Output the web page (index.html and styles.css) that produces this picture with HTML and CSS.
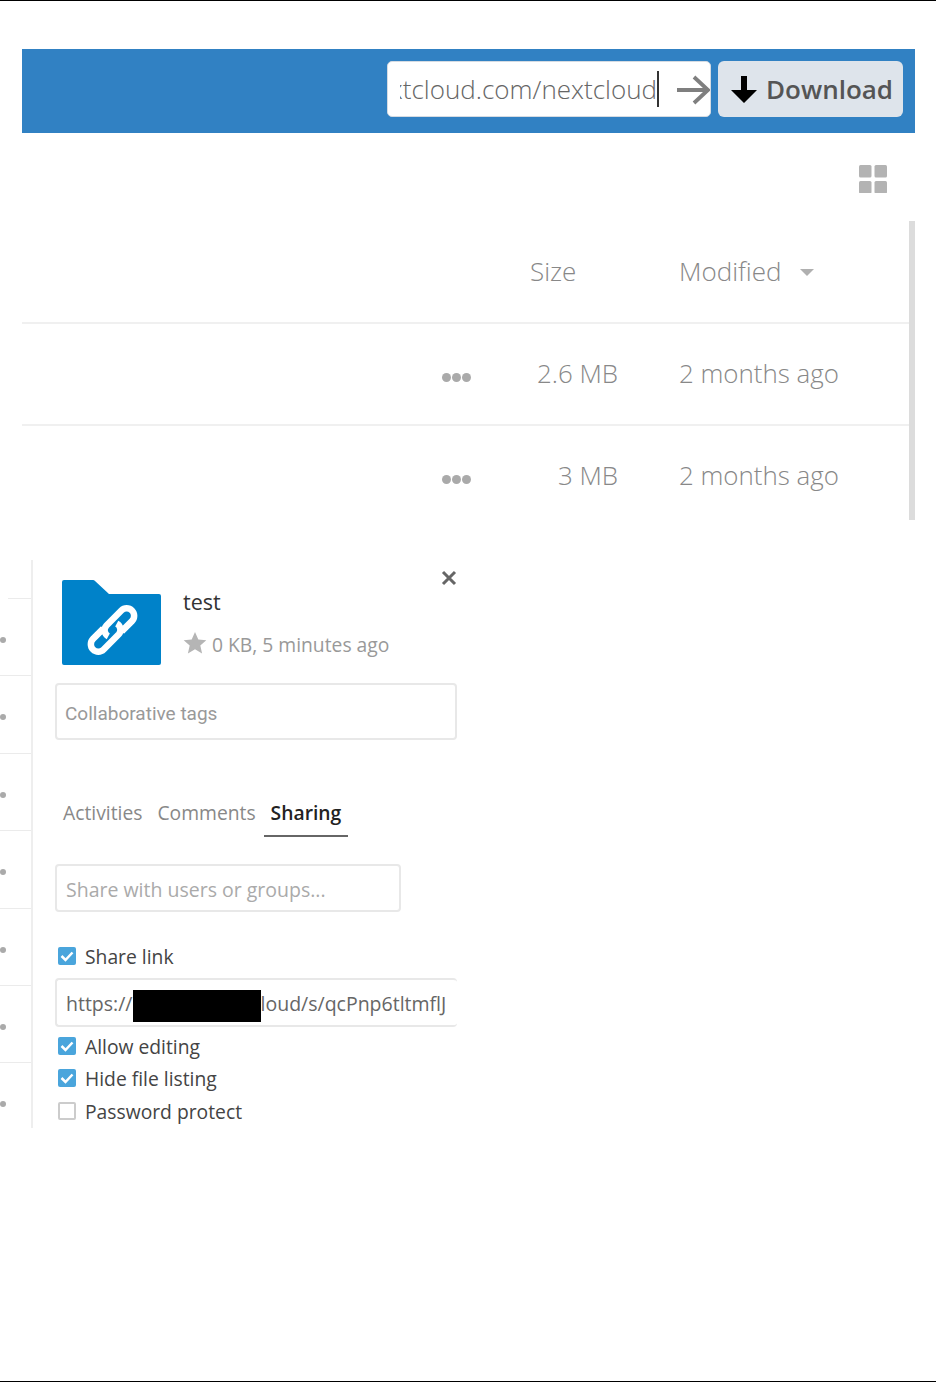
FILE: index.html
```html
<!DOCTYPE html>
<html lang="en">
<head>
<meta charset="utf-8">
<title>Nextcloud share</title>
<link rel="stylesheet" href="styles.css">
</head>
<body>
<div class="page">
  <section class="shot-top">
    <header class="bar">
      <div class="url">
        <span class="url-clip"><span class="url-text">nextcloud.com/nextcloud</span></span>
        <span class="caret"></span>
        <svg class="go" width="34" height="30" viewBox="0 0 34 30"><path d="M1 15H31M18 2l14 13-14 13" fill="none" stroke="#7f7f7f" stroke-width="3.800"/></svg>
      </div>
      <button class="dl">
        <svg width="28" height="28" viewBox="0 0 28 28"><path d="M11 1h6v14h10L14 28 1 15h10z" fill="#000"/></svg>
        <span>Download</span>
      </button>
    </header>
    <div class="view-row">
      <svg width="28" height="28" viewBox="0 0 28 28" fill="#b3b3b3"><rect width="12.500" height="12.500" rx="1.500"/><rect x="15.500" width="12.500" height="12.500" rx="1.500"/><rect y="16" width="12.500" height="12.500" rx="1.500"/><rect x="15.500" y="16" width="12.500" height="12.500" rx="1.500"/></svg>
    </div>
    <div class="table">
      <div class="row head"><span class="size">Size</span><span class="mod">Modified<i class="tri"></i></span></div>
      <div class="row"><span class="dots"><i></i><i></i><i></i></span><span class="size r">2.6 MB</span><span class="mod">2 months ago</span></div>
      <div class="row last"><span class="dots"><i></i><i></i><i></i></span><span class="size r">3 MB</span><span class="mod">2 months ago</span></div>
    </div>
  </section>

  <section class="shot-bottom">
    <div class="rail">
      <div class="rail-row"><i></i></div><div class="rail-row"><i></i></div><div class="rail-row"><i></i></div><div class="rail-row"><i></i></div><div class="rail-row"><i></i></div><div class="rail-row"><i></i></div><div class="rail-row"><i></i></div>
    </div>
    <div class="panel">
      <div class="info">
        <svg class="folder" width="100" height="85" viewBox="0 0 100 85">
          <path d="M2 0h29a3 3 0 0 1 2 1l14 13h50a2 2 0 0 1 2 2v67a2 2 0 0 1-2 2H2a2 2 0 0 1-2-2V2a2 2 0 0 1 2-2z" fill="#0082c9"/>
          <g fill="none" stroke="#fff" stroke-width="6.500" transform="translate(50.500 50) rotate(-45)">
            <path d="M5.500 7.500H20A7.500 7.500 0 0 0 20 -7.500H-1A7 7 0 0 0 -7.500 1.500"/>
            <path d="M-5.500 -7.500H-20A7.500 7.500 0 0 0 -20 7.500H1A7 7 0 0 0 7.500 -1.500"/>
          </g>
        </svg>
        <div class="meta">
          <div class="name">test</div>
          <div class="sub">
            <svg width="24" height="24" viewBox="0 0 24 24"><path d="M12 1l3.300 7.400 8 .8-6 5.300 1.800 7.900L12 18.300l-7.100 4.100 1.800-7.900-6-5.300 8-.8z" fill="#b5b5b5"/></svg>
            <span>0 KB, 5 minutes ago</span>
          </div>
        </div>
        <svg class="close" width="16" height="16" viewBox="0 0 16 16"><path d="M2 2l12 12M14 2L2 14" stroke="#666" stroke-width="3"/></svg>
      </div>
      <div class="field tags">Collaborative tags</div>
      <nav class="tabs">
        <a class="tab">Activities</a>
        <a class="tab">Comments</a>
        <a class="tab on">Sharing</a>
      </nav>
      <div class="field share">Share with users or groups...</div>
      <label class="check first"><span class="box on"><svg width="18" height="18" viewBox="0 0 18 18"><path d="M3.500 9l4 4 7-7.500" fill="none" stroke="#fff" stroke-width="2.500"/></svg></span>Share link</label>
      <div class="field link"><span>https://</span><span class="redact"></span><span>loud/s/qcPnp6tltmflJ</span></div>
      <label class="check c2"><span class="box on"><svg width="18" height="18" viewBox="0 0 18 18"><path d="M3.500 9l4 4 7-7.500" fill="none" stroke="#fff" stroke-width="2.500"/></svg></span>Allow editing</label>
      <label class="check"><span class="box on"><svg width="18" height="18" viewBox="0 0 18 18"><path d="M3.500 9l4 4 7-7.500" fill="none" stroke="#fff" stroke-width="2.500"/></svg></span>Hide file listing</label>
      <label class="check c4"><span class="box"></span>Password protect</label>
    </div>
  </section>
</div>
</body>
</html>
```
FILE: styles.css
```css
* { box-sizing: border-box; }
html, body { margin: 0; padding: 0; background: #fff; }
body { font-family: "Open Sans", sans-serif; }
.page {
  height: 1382px;
  border-top: 1px solid #000;
  border-bottom: 1px solid #000;
  overflow: hidden;
}
.shot-top { margin: 48px 21px 0 22px; }
.bar {
  height: 84px;
  background: #3181c3;
  display: flex;
  justify-content: flex-end;
  align-items: center;
  gap: 7px;
  padding: 0 12px 4px 0;
}
.url {
  width: 324px;
  height: 56px;
  background: #fff;
  border: 1px solid #d5dbe2;
  border-radius: 5px;
  display: flex;
  align-items: center;
  padding-left: 12px;
  color: #666;
  font-size: 26px;
  font-weight: 300;
}
.url-clip { width: 258px; overflow: hidden; display: flex; justify-content: flex-end; white-space: nowrap; }
.url-text { flex: none; }
.caret { width: 2px; height: 36px; background: #333; flex: none; }
.go { margin: 2px 0 0 17px; flex: none; }
.dl {
  width: 185px;
  height: 56px;
  background: #dee4eb;
  border: 0;
  border-radius: 6px;
  display: flex;
  align-items: center;
  gap: 8px;
  padding: 0 0 0 12px;
  font-family: "Open Sans", sans-serif;
  font-size: 26px;
  font-weight: 600;
  color: #555;
  white-space: nowrap;
}
.view-row { height: 88px; display: flex; justify-content: flex-end; padding: 32px 28px 0 0; }
.table { border-right: 6px solid #dcdcdc; height: 299px; }
.row {
  height: 102px;
  display: grid;
  grid-template-columns: 67px 109px 1fr;
  align-items: center;
  padding: 0 0 2px 420px;
  border-bottom: 2px solid #f0f0f0;
  font-size: 25.900px;
  font-weight: 300;
  color: #888;
}
.row.head { font-size: 26px; height: 103px; padding-bottom: 1px; }
.row.last { border-bottom: 0; height: 94px; padding: 4px 0 0 420px; }
.size { grid-column: 2; padding-left: 21px; }
.size.r { padding-left: 0; text-align: right; }
.mod { grid-column: 3; padding-left: 61px; display: flex; align-items: center; white-space: nowrap; }
.tri { width: 0; height: 0; border: 7.500px solid transparent; border-top-color: #b0b0b0; border-bottom: 0; margin-left: 18px; margin-top: 3px; }
.dots { grid-column: 1; margin-top: 9px; display: flex; gap: 1px; }
.last .dots { margin-top: 9px; }
.dots i { width: 9px; height: 9px; border-radius: 50%; background: #aaa; }

.shot-bottom { display: flex; margin-top: 40px; height: 568px; }
.rail { width: 33px; border-right: 2px solid #eee; padding-top: 38px; }
.rail-row { height: 77.400px; border-top: 1px solid #ebebeb; position: relative; }
.rail-row:first-child { border-top-color: transparent; }
.rail-row:first-child::before { content: ""; position: absolute; left: 8px; right: 0; top: -1px; height: 1px; background: #ebebeb; }
.rail-row i { position: absolute; left: 0; top: 38px; width: 6px; height: 6px; border-radius: 50%; background: #aaa; }
.panel { width: 424px; padding-left: 22px; position: relative; }
.info { height: 123px; display: flex; padding: 20px 0 0 7px; }
.folder { flex: none; }
.meta { margin-left: 21px; padding-top: 7px; }
.name { font-size: 21.500px; font-weight: 400; color: #333; line-height: 30px; }
.sub { display: flex; align-items: center; gap: 5px; margin-top: 14px; font-size: 19.300px; color: #999; }
.sub svg { margin-top: -3px; }
.close { position: absolute; left: 408px; top: 10px; }
.field {
  border: 2px solid #e8e8e8;
  border-radius: 4px;
  background: #fff;
  display: flex;
  align-items: center;
  color: #999;
}
.tags { width: 402px; height: 57px; padding: 3px 0 0 8px; font-family: Roboto, sans-serif; font-size: 19px; }
.tabs { display: flex; margin: 58px 0 0 0; height: 38px; padding-left: 1px; }
.tab { padding: 0 7px; font-size: 19.300px; line-height: 30px; color: #888; margin-right: 1px; }
.tab.on { color: #222; font-weight: 600; border-bottom: 2px solid #666; height: 39px; }
.share { width: 346px; height: 48px; margin-top: 28px; padding: 2px 0 0 9px; font-size: 19.500px; color: #aaa; }
.check { display: flex; align-items: center; height: 32px; font-size: 19.300px; color: #444; padding-left: 3px; gap: 9px; }
.check.first { margin-top: 28px; }
.check.c2 { margin-top: 3px; }
.check.c4 { margin-top: 1px; }
.box { width: 18px; height: 18px; border: 2px solid #ccc; border-radius: 2px; background: #fff; flex: none; display: block; }
.box.on { border: 0; background: #4aa5dc; }
.box svg { display: block; }
.link { width: 402px; height: 49px; margin-top: 6px; padding: 2px 0 0 9px; font-size: 19.500px; color: #666; border-right: 0; overflow: hidden; white-space: nowrap; }
.redact { width: 128px; height: 32px; background: #000; flex: none; margin-top: 4px; }
```
